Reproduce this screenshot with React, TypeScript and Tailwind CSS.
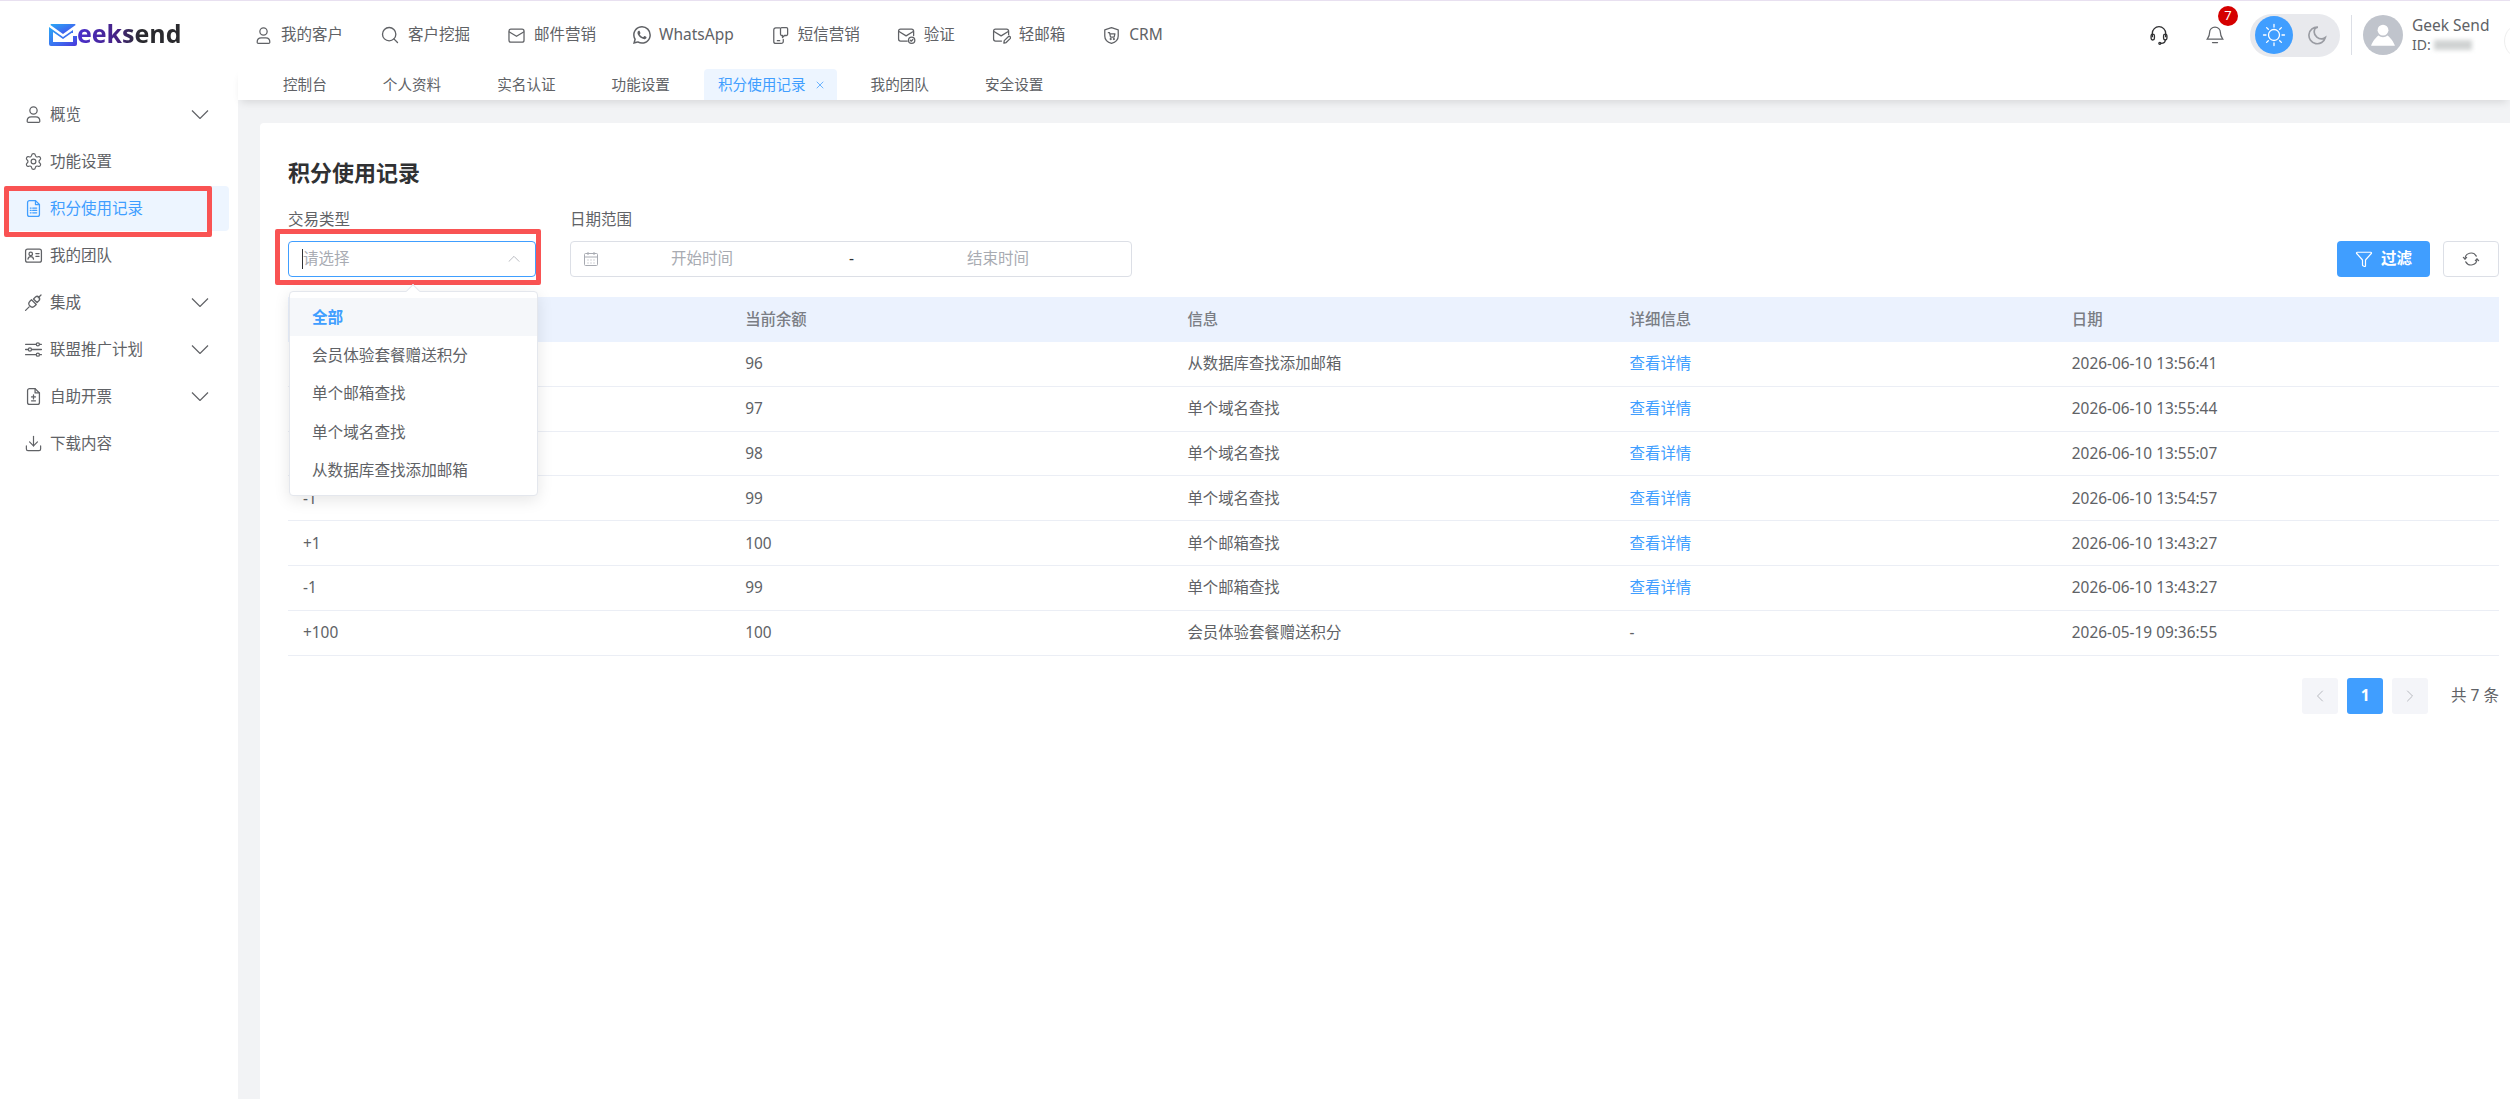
import { ChevronLeft, ChevronRight, Download, Filter, Search, Settings, X } from 'lucide-react';
import { BsWhatsapp } from 'react-icons/bs';
import type { ReactNode } from 'react';

const FONT = { fontFamily: '"Noto Sans", "Noto Sans CJK SC", sans-serif' };

function Svg({ size = 19, className = '', children }: { size?: number; className?: string; children: ReactNode }) {
  return (
    <svg width={size} height={size} viewBox="0 0 24 24" fill="none" stroke="currentColor" strokeWidth="1.6" strokeLinecap="round" strokeLinejoin="round" className={className}>
      {children}
    </svg>
  );
}

const UserIcon = () => (
  <Svg>
    <circle cx="12" cy="7" r="4.6" />
    <path d="M4 20.5c0-3.6 2.4-5.5 5-5.5h6c2.6 0 5 1.9 5 5.5 0 1-.6 1.5-1.5 1.5h-13C4.600 22 4 21.500 4 20.500z" />
  </Svg>
);
const MailIcon = () => (
  <Svg>
    <rect x="2.500" y="4" width="19" height="16.500" rx="2.500" />
    <path d="M3 7.500l9 5.500 9-5.500" />
  </Svg>
);
const SmsIcon = () => (
  <Svg>
    <path d="M11 2.500H6a2.500 2.500 0 0 0-2.500 2.500v14.500A2.500 2.500 0 0 0 6 22h7a2.500 2.500 0 0 0 2.500-2.500V17" />
    <path d="M8 18.500h3" />
    <path d="M12 3.500a1.500 1.500 0 0 1 1.500-1.500h6A1.500 1.500 0 0 1 21 3.500v7a1.500 1.500 0 0 1-1.500 1.500H17l-2.500 2.500V12h-1a1.500 1.500 0 0 1-1.500-1.500z" />
  </Svg>
);
const MailCheckIcon = () => (
  <Svg>
    <path d="M13 19H4.500A2.500 2.500 0 0 1 2 16.500v-10A2.500 2.500 0 0 1 4.500 4h14A2.500 2.500 0 0 1 21 6.500V12" />
    <path d="M2.500 7l9 5.500L20.500 7" />
    <circle cx="18.500" cy="18" r="4" />
    <path d="M16.800 18l1.200 1.200 2-2.200" />
  </Svg>
);
const MailEditIcon = () => (
  <Svg>
    <path d="M12 19H4.500A2.500 2.500 0 0 1 2 16.500v-10A2.500 2.500 0 0 1 4.500 4h14A2.500 2.500 0 0 1 21 6.500V11" />
    <path d="M2.500 7l9 5.500L20.500 7" />
    <path d="M15 21.500l.5-3 5-5a1.700 1.700 0 0 1 2.400 2.400l-5 5z" />
  </Svg>
);
const ShieldCartIcon = () => (
  <Svg>
    <path d="M12 2l8.500 3v7.500c0 4.800-3.600 7.900-8.500 9.500-4.900-1.600-8.500-4.700-8.500-9.500V5z" />
    <path d="M8 8.500h1.500l1.300 5.500h4.500l1-4H10" />
    <circle cx="11" cy="16.500" r=".6" />
    <circle cx="15" cy="16.500" r=".6" />
  </Svg>
);
const RecordIcon = () => (
  <Svg>
    <path d="M14.500 2H7a2.500 2.500 0 0 0-2.500 2.500v15A2.500 2.500 0 0 0 7 22h10a2.500 2.500 0 0 0 2.500-2.500V7z" />
    <path d="M14.500 2v5h5" />
    <path d="M8 11.500h1M11 11.500h5M8 14.500h1M11 14.500h5M8 17.500h1M11 17.500h5" />
  </Svg>
);
const CardIcon = () => (
  <Svg>
    <rect x="2" y="4" width="20" height="16.500" rx="2.500" />
    <circle cx="8.500" cy="10" r="2.200" />
    <path d="M5 16.500c.3-2 1.700-3 3.500-3s3.200 1 3.500 3M15 9.500h4M15 13h4" />
  </Svg>
);
const PlugIcon = () => (
  <Svg>
    <path d="M2 22l4.500-4.500" />
    <path d="M9.500 8.500l6 6-2 2a4.200 4.200 0 0 1-6-6z" />
    <path d="M14.500 5l-2.500 2.500 4.500 4.500 2.500-2.500a3.200 3.200 0 0 0-4.500-4.500z" />
    <path d="M18 6l3.500-3.500" />
  </Svg>
);
const SlidersIcon = () => (
  <Svg>
    <path d="M2 5.500h13M20 5.500h2M2 12h3M10 12h12M2 18.500h13M20 18.500h2" />
    <circle cx="17.500" cy="5.500" r="2" />
    <circle cx="7.500" cy="12" r="2" />
    <circle cx="17.500" cy="18.500" r="2" />
  </Svg>
);
const InvoiceIcon = () => (
  <Svg>
    <path d="M14 2H7a2.500 2.500 0 0 0-2.500 2.500v15A2.500 2.500 0 0 0 7 22h10a2.500 2.500 0 0 0 2.500-2.500V7.500z" />
    <path d="M14 2v5.500h5.500" />
    <path d="M12 10v5M9.500 12.500h5M9.500 17.500h5" />
  </Svg>
);
const RefreshIcon = () => (
  <Svg size={18}>
    <path d="M4 12a8 8 0 0 1 15-3.800" />
    <path d="M20 12a8 8 0 0 1-15 3.800" />
    <path d="M1.800 9.800L4 12.200l2.200-2.400" />
    <path d="M17.800 14.200L20 11.800l2.200 2.400" />
  </Svg>
);
const Chevron = ({ up = false, width = 18, className = '' }: { up?: boolean; width?: number; className?: string }) => (
  <svg width={width} height={width / 2} viewBox="0 0 18 9" fill="none" stroke="currentColor" strokeWidth="1.200" className={className}>
    <path d={up ? 'M1 8.500l8-8 8 8' : 'M1 .5l8 8 8-8'} />
  </svg>
);

const topNav = [
  { label: '我的客户', icon: <UserIcon /> },
  { label: '客户挖掘', icon: <Search size={20} strokeWidth={1.6} /> },
  { label: '邮件营销', icon: <MailIcon /> },
  { label: 'WhatsApp', icon: <BsWhatsapp size={18} /> },
  { label: '短信营销', icon: <SmsIcon /> },
  { label: '验证', icon: <MailCheckIcon /> },
  { label: '轻邮箱', icon: <MailEditIcon /> },
  { label: 'CRM', icon: <ShieldCartIcon /> },
];

const tabs = ['控制台', '个人资料', '实名认证', '功能设置', '积分使用记录', '我的团队', '安全设置'];

const sideNav = [
  { label: '概览', icon: <UserIcon />, more: true },
  { label: '功能设置', icon: <Settings size={19} strokeWidth={1.5} /> },
  { label: '积分使用记录', icon: <RecordIcon />, active: true },
  { label: '我的团队', icon: <CardIcon /> },
  { label: '集成', icon: <PlugIcon />, more: true },
  { label: '联盟推广计划', icon: <SlidersIcon />, more: true },
  { label: '自助开票', icon: <InvoiceIcon />, more: true },
  { label: '下载内容', icon: <Download size={19} strokeWidth={1.5} /> },
];

const options = ['全部', '会员体验套餐赠送积分', '单个邮箱查找', '单个域名查找', '从数据库查找添加邮箱'];

const rows = [
  ['-1', '96', '从数据库查找添加邮箱', '查看详情', '2026-06-10 13:56:41'],
  ['-1', '97', '单个域名查找', '查看详情', '2026-06-10 13:55:44'],
  ['-1', '98', '单个域名查找', '查看详情', '2026-06-10 13:55:07'],
  ['-1', '99', '单个域名查找', '查看详情', '2026-06-10 13:54:57'],
  ['+1', '100', '单个邮箱查找', '查看详情', '2026-06-10 13:43:27'],
  ['-1', '99', '单个邮箱查找', '查看详情', '2026-06-10 13:43:27'],
  ['+100', '100', '会员体验套餐赠送积分', '-', '2026-05-19 09:36:55'],
];

function Logo() {
  return (
    <div className="flex items-center">
      <svg width="28" height="22" viewBox="0 0 28 22">
        <defs>
          <linearGradient id="lg" x1="0" y1="0" x2="1" y2="1">
            <stop offset="0" stopColor="#2aa8f5" />
            <stop offset="0.6" stopColor="#3d6cf0" />
            <stop offset="1" stopColor="#4a35d8" />
          </linearGradient>
        </defs>
        <path d="M2 0h24a2 2 0 0 1 .6 1L14 10 1.400 1A2 2 0 0 1 2 0z" fill="url(#lg)" />
        <path d="M0 3l14 10 10-7v3h-1.500L14 15 4 8v10h20v-6h4v8a2 2 0 0 1-2 2H2a2 2 0 0 1-2-2z" fill="url(#lg)" />
      </svg>
      <span className="-mt-[3px] bg-gradient-to-r from-[#4a2fd0] via-[#45207f] via-40% to-[#2a2a2e] to-60% bg-clip-text text-[25px] font-bold leading-none text-transparent" style={{ fontFamily: '"Open Sans", sans-serif' }}>
        eeksend
      </span>
    </div>
  );
}

function TopBar() {
  return (
    <div className="relative flex h-[69px] shrink-0 items-start overflow-hidden border-t border-[#e8e0f0] bg-white">
      <div className="w-[254px] shrink-0 pl-[49px] pt-[23px]">
        <Logo />
      </div>
      <nav className="flex h-[68px] items-center gap-[37px] text-[15.5px] text-[#606266]">
        {topNav.map(n => (
          <div key={n.label} className="flex items-center gap-[8px]">
            {n.icon}
            <span>{n.label}</span>
          </div>
        ))}
      </nav>
      <div className="ml-auto flex h-[68px] items-center">
        <div className="mr-[36px] text-[#303133]">
          <svg width="20" height="22" viewBox="0 0 24 24" fill="none" stroke="currentColor" strokeWidth="1.600" strokeLinecap="round">
            <path d="M4 14v-4a8 8 0 0 1 16 0v4" />
            <rect x="2.500" y="11" width="4" height="7" rx="2" />
            <rect x="17.500" y="11" width="4" height="7" rx="2" />
            <path d="M19.500 18c0 2.500-2 4-5 4" />
            <circle cx="13" cy="22" r="1.200" />
          </svg>
        </div>
        <div className="relative mr-[25px] text-[#606266]">
          <svg width="20" height="22" viewBox="0 0 24 24" fill="none" stroke="currentColor" strokeWidth="1.500" strokeLinecap="round">
            <path d="M12 2.500a6.500 6.500 0 0 0-6.500 6.500c0 5-2.500 7-3 8h19c-.5-1-3-3-3-8A6.500 6.500 0 0 0 12 2.500z" />
            <path d="M9 21h6" />
          </svg>
          <span className="absolute -right-[13px] -top-[18px] flex h-[20px] w-[20px] items-center justify-center rounded-full bg-[#d50000] text-[13px] text-white">7</span>
        </div>
        <div className="flex h-[43px] w-[90px] items-center rounded-full bg-[#e8e9ed] pl-[5px]">
          <div className="flex h-[38px] w-[38px] items-center justify-center rounded-full bg-[#409eff] text-white">
            <svg width="24" height="24" viewBox="0 0 24 24" fill="none" stroke="currentColor" strokeWidth="1.300" strokeLinecap="round">
              <circle cx="12" cy="12" r="5.500" />
              <path d="M12 1.500v2.500M12 20v2.500M1.500 12H4M20 12h2.500M4.600 4.600l1.700 1.700M17.700 17.700l1.700 1.700M4.600 19.400l1.700-1.700M17.700 6.300l1.700-1.700" />
            </svg>
          </div>
          <svg width="20" height="20" viewBox="0 0 24 24" fill="none" stroke="#9a9ca3" strokeWidth="2" className="ml-[14px]">
            <path d="M13 2.500A10 10 0 1 0 22 15 8.500 8.500 0 0 1 9.500 4.500 8 8 0 0 1 13 2.500z" />
          </svg>
        </div>
        <div className="mx-[11px] h-[40px] w-px bg-[#dcdfe6]" />
        <div className="flex h-[40px] w-[40px] items-center justify-center overflow-hidden rounded-full bg-[#c0c4cc] text-white">
          <svg width="26" height="26" viewBox="0 0 24 24" fill="currentColor">
            <circle cx="12" cy="7.500" r="5" />
            <path d="M8 12.500c-2 .8-6 6-7 9.500h22c-1-3.500-5-8.700-7-9.500-2.200 2-5.800 2-8 0z" />
          </svg>
        </div>
        <div className="ml-[9px] w-[98px] text-[15.5px] leading-[20px] text-[#606266]">
          <div>Geek Send</div>
          <div className="flex items-center text-[14px]">
            ID:
            <div className="ml-[3px] h-[10px] w-[38px] bg-[#d0d3d3] blur-[2px]" />
          </div>
        </div>
      </div>
      <div className="absolute -right-[30px] top-[22px] h-[36px] w-[36px] rounded-full border border-[#eeeeee]" />
    </div>
  );
}

function Sidebar() {
  return (
    <aside className="w-[238px] shrink-0 bg-white pl-[4px] pr-[9px] pt-[23px] text-[15.5px] text-[#606266]">
      {sideNav.map(item => (
        <div key={item.label} className={`relative mb-[2px] flex h-[45px] items-center gap-[7px] rounded-[4px] pl-[20px] pr-[20px] ${item.active ? 'bg-[#edf5ff] text-[#409eff]' : ''}`}>
          {item.icon}
          <span>{item.label}</span>
          {item.more && <Chevron className="ml-auto" />}
          {item.active && <div className="absolute -bottom-[6px] left-0 right-[17px] top-0 rounded-[2px] border-[5px] border-[#f95353]" />}
        </div>
      ))}
    </aside>
  );
}

function Tabs() {
  return (
    <div className="relative z-10 flex h-[31px] shrink-0 items-stretch bg-white pl-[17px] text-[14.6px] text-[#606266] shadow-[0_5px_8px_-3px_rgba(0,0,0,0.12)]">
      {tabs.map(t =>
        t === '积分使用记录' ? (
          <div key={t} className="mx-[6px] flex items-center gap-[8px] rounded-t-[4px] bg-[#edf5ff] pl-[14px] pr-[11px] text-[#409eff]">
            {t}
            <X size={12} strokeWidth={1.5} />
          </div>
        ) : (
          <div key={t} className="flex items-center px-[28px]">{t}</div>
        ),
      )}
    </div>
  );
}

function TypeSelect() {
  return (
    <div className="relative w-[248px]">
      <div className="mb-[12px] text-[15.5px] leading-[20px] text-[#606266]">交易类型</div>
      <div className="flex h-[36px] items-center rounded-[4px] border border-[#409eff] bg-white pl-[13px] pr-[8px] text-[15.5px] text-[#a8abb2]">
        <span className="h-[20px] w-px bg-[#303133]" />
        请选择
        <Chevron up width={12} className="ml-auto mr-[7px]" />
      </div>
      {/* red annotation round the select */}
      <div className="absolute -left-[13px] -right-[5px] bottom-[-8px] top-[20px] rounded-[2px] border-[5px] border-[#f95353]" />
      <div className="absolute left-[1px] top-[82px] z-20 h-[205px] w-[249px] rounded-[4px] border border-[#e4e7ed] bg-white py-[6px] text-[15.6px] text-[#606266] shadow-[0_4px_16px_rgba(0,0,0,0.1)]">
        <div className="absolute -top-[6px] left-[118px] h-[10px] w-[10px] rotate-45 border-l border-t border-[#e4e7ed] bg-white" />
        {options.map((o, i) => (
          <div key={o} className={`relative flex h-[38.4px] items-center pl-[22px] ${i === 0 ? 'bg-[#f5f7fa] font-bold text-[#409eff]' : ''}`}>{o}</div>
        ))}
      </div>
    </div>
  );
}

function DateRange() {
  return (
    <div className="w-[562px]">
      <div className="mb-[12px] text-[15.5px] leading-[20px] text-[#606266]">日期范围</div>
      <div className="flex h-[36px] items-center rounded-[4px] border border-[#dcdfe6] bg-white text-[15.5px] text-[#a8abb2]">
        <svg width="16" height="16" viewBox="0 0 16 16" fill="none" stroke="currentColor" className="ml-[12px]">
          <rect x="1.500" y="2.500" width="13" height="12" rx="1" />
          <path d="M1.500 6h13M5 1v3M11 1v3M4.500 9h1M7.500 9h1M10.500 9h1M4.500 12h1M7.500 12h1M10.500 12h1" />
        </svg>
        <span className="ml-[72px] w-[178px]">开始时间</span>
        <span className="text-[#303133]">-</span>
        <span className="ml-[113px]">结束时间</span>
      </div>
    </div>
  );
}

function Table() {
  return (
    <div className="mt-[20px] text-[15.4px] text-[#606266]">
      <div className="grid h-[45px] grid-cols-5 items-center bg-[#ebf2fe] font-medium text-[#7a7d84]">
        {['', '当前余额', '信息', '详细信息', '日期'].map(h => (
          <div key={h} className="pl-[15px]">{h}</div>
        ))}
      </div>
      {rows.map(r => (
        <div key={r[4]} className="grid h-[44.8px] grid-cols-5 items-center border-b border-[#ebeef5]">
          {r.map((c, i) => (
            <div key={i} className={`pl-[15px] ${c === '查看详情' ? 'text-[#409eff]' : ''}`}>{c}</div>
          ))}
        </div>
      ))}
    </div>
  );
}

function Pagination() {
  return (
    <div className="mt-[22px] flex items-center justify-end text-[15.5px] text-[#606266]">
      <div className="flex h-[36px] w-[36px] items-center justify-center rounded-[3px] bg-[#f4f5f9] text-[#b8bac0]">
        <ChevronLeft size={20} strokeWidth={1.2} />
      </div>
      <div className="mx-[9px] flex h-[36px] w-[36px] items-center justify-center rounded-[3px] bg-[#409eff] font-bold text-white">1</div>
      <div className="flex h-[36px] w-[36px] items-center justify-center rounded-[3px] bg-[#f4f5f9] text-[#b8bac0]">
        <ChevronRight size={20} strokeWidth={1.2} />
      </div>
      <span className="ml-[23px]">共 7 条</span>
    </div>
  );
}

export default function App() {
  return (
    <div className="flex h-[1099px] w-[2510px] flex-col overflow-hidden bg-white" style={FONT}>
      <TopBar />
      <div className="flex min-h-0 flex-1">
        <Sidebar />
        <div className="flex min-w-0 flex-1 flex-col bg-[#f2f3f5]">
          <Tabs />
          <div className="ml-[22px] mt-[23px] flex-1 rounded-tl-[4px] bg-white pl-[28px] pr-[11px] pt-[35px]">
            <h1 className="text-[22px] font-bold leading-[28px] text-[#303133]">积分使用记录</h1>
            <div className="mt-[23px] flex items-end">
              <TypeSelect />
              <div className="ml-[34px]"><DateRange /></div>
              <button className="ml-auto flex h-[36px] w-[93px] items-center justify-center gap-[8px] rounded-[4px] bg-[#409eff] text-[15.5px] font-bold text-white">
                <Filter size={18} strokeWidth={1.6} />
                过滤
              </button>
              <button className="ml-[13px] flex h-[36px] w-[56px] items-center justify-center rounded-[4px] border border-[#dcdfe6] bg-white text-[#606266]">
                <RefreshIcon />
              </button>
            </div>
            <Table />
            <Pagination />
          </div>
        </div>
      </div>
    </div>
  );
}
